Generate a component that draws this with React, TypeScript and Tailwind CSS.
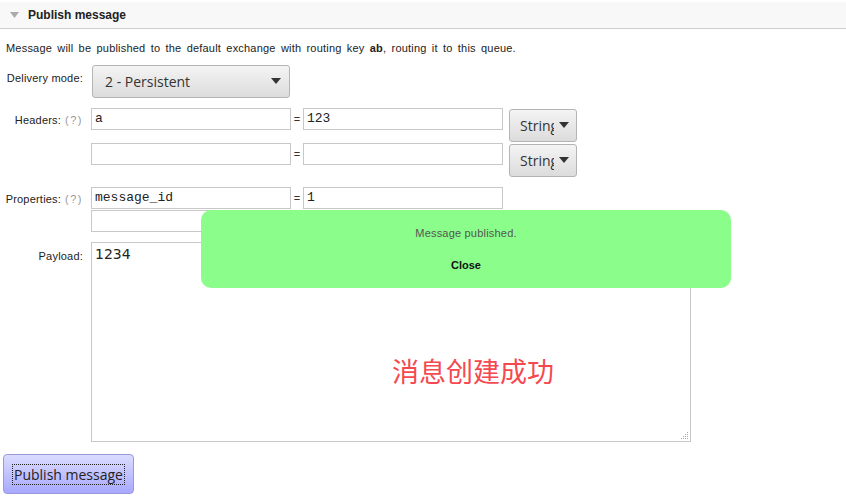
const ui = "font-['Liberation_Sans',Arial,sans-serif]";
const mono = "font-['Liberation_Mono','Courier_New',monospace]";
const btnFont = "font-['Open_Sans','Noto_Sans',sans-serif]";

const Caret = () => (
  <svg width="10" height="6" viewBox="0 0 10 6" className="shrink-0">
    <path d="M0 0 L10 0 L5 6 Z" fill="#333" />
  </svg>
);

const TextBox = ({ value, className = "" }: { value?: string; className?: string }) => (
  <div
    className={`w-[200px] h-[22px] border border-[#c8c8c8] bg-white px-[3px] text-[13px] leading-[20px] text-[#222] ${mono} ${className}`}
  >
    {value}
  </div>
);

const Pair = ({ k, v }: { k?: string; v?: string }) => (
  <div className="flex items-start">
    <TextBox value={k} />
    <span className={`w-[12px] text-center text-[11px] leading-[22px] text-[#333] ${ui}`}>=</span>
    <TextBox value={v} />
  </div>
);

const TypeButton = () => (
  <div
    className={`ml-[6px] mt-[1px] w-[68px] h-[33px] rounded-[3px] border border-[#b4b4b4] bg-gradient-to-b from-[#f4f4f4] to-[#dcdcdc] flex items-center pl-[10px] gap-[5px] overflow-hidden text-[14px] text-[#333] ${btnFont}`}
  >
    <span className="w-[34px] overflow-hidden whitespace-nowrap pt-[1px]">String</span>
    <Caret />
  </div>
);

const Label = ({ text, help }: { text: string; help?: boolean }) => (
  <div className={`w-[84px] shrink-0 text-right pr-[1px] text-[11px] tracking-[0.2px] text-[#222] ${ui}`}>
    {text}
    {help && <span className="ml-[4px] tracking-[1.5px] text-[#999]">(?)</span>}
  </div>
);

export default function App() {
  return (
    <div className={`relative w-[846px] h-[500px] bg-white overflow-hidden ${ui}`}>
      <div className="mt-[2px] h-[27px] bg-[#f8f8f8] border-b border-[#cfcfcf] flex items-center pl-[10px]">
        <svg width="9" height="6" viewBox="0 0 9 6">
          <path d="M0 0 L9 0 L4.5 6 Z" fill="#aaa" />
        </svg>
        <span className="ml-[9px] text-[12px] font-bold text-[#222]">Publish message</span>
      </div>

      <p className="mt-[11px] pl-[6px] text-[11px] tracking-[0.2px] [word-spacing:2px] text-[#222]">
        Message will be published to the default exchange with routing key <b>ab</b>, routing it to this
        queue.
      </p>

      <div className="mt-[8px] flex items-start">
        <div className="pt-[5px]">
          <Label text="Delivery mode:" />
        </div>
        <div
          className={`ml-[8px] w-[198px] h-[33px] rounded-[3px] border border-[#b4b4b4] bg-gradient-to-b from-[#f4f4f4] to-[#dcdcdc] flex items-center justify-between pl-[12px] pr-[8px] text-[14px] text-[#333] ${btnFont}`}
        >
          <span>2 - Persistent</span>
          <Caret />
        </div>
      </div>

      <div className="mt-[10px] flex items-start">
        <div className="pt-[4px]">
          <Label text="Headers:" help />
        </div>
        <div className="ml-[7px] flex flex-col gap-[1px]">
          <div className="flex items-start">
            <Pair k="a" v="123" />
            <TypeButton />
          </div>
          <div className="flex items-start">
            <Pair />
            <TypeButton />
          </div>
        </div>
      </div>

      <div className="mt-[10px] flex items-start">
        <div className="pt-[4px]">
          <Label text="Properties:" help />
        </div>
        <div className="ml-[7px] flex flex-col gap-[1px]">
          <Pair k="message_id" v="1" />
          <Pair />
        </div>
      </div>

      <div className="mt-[10px] flex items-start">
        <div className="pt-[6px]">
          <Label text="Payload:" />
        </div>
        <div className="relative ml-[7px] w-[600px] h-[200px] border border-[#c8c8c8] px-[3px] pt-[1px] text-[14px] text-[#222] font-['DejaVu_Sans',sans-serif]">
          1234
          <svg width="8" height="8" viewBox="0 0 8 8" className="absolute right-[1px] bottom-[1px]">
            <g fill="#aaa">
              <rect x="6" y="0" width="1" height="1" />
              <rect x="4" y="2" width="1" height="1" />
              <rect x="6" y="2" width="1" height="1" />
              <rect x="2" y="4" width="1" height="1" />
              <rect x="4" y="4" width="1" height="1" />
              <rect x="6" y="4" width="1" height="1" />
              <rect x="0" y="6" width="1" height="1" />
              <rect x="2" y="6" width="1" height="1" />
              <rect x="4" y="6" width="1" height="1" />
              <rect x="6" y="6" width="1" height="1" />
            </g>
          </svg>
        </div>
      </div>

      <div className="mt-[12px] ml-[3px]">
        <button
          className={`w-[131px] h-[40px] rounded-[4px] border border-[#9999dd] bg-gradient-to-b from-[#dcdcff] to-[#a8a8ff] pt-[1px] text-[14px] text-[#222] ${btnFont}`}
        >
          <span className="outline outline-1 outline-dotted outline-[#222] px-[1px]">Publish message</span>
        </button>
      </div>

      <div className="absolute left-[201px] top-[210px] w-[530px] h-[78px] rounded-[10px] bg-[#8bfd8b] flex flex-col items-center pt-[15px]">
        <span className="text-[11px] tracking-[0.2px] text-[#555]">Message published.</span>
        <span className="mt-[15px] text-[11px] font-bold text-[#111]">Close</span>
      </div>

      <div className="absolute left-[392px] top-[351px] text-[27px] text-[#f5484f] font-['Noto_Sans_CJK_SC',sans-serif]">
        消息创建成功
      </div>
    </div>
  );
}
